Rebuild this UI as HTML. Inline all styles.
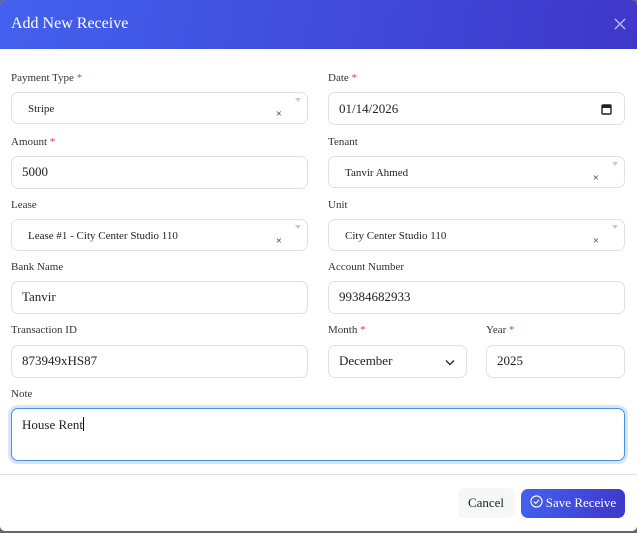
<!DOCTYPE html>
<html><head><style>
*{box-sizing:border-box;margin:0;padding:0}
body{width:637px;height:533px;background:#666;position:relative;overflow:hidden;font-family:"Liberation Serif",serif;color:#333}
.m{position:absolute;left:0;top:0;width:637px;height:531px;background:#fff;border-radius:5px;overflow:hidden}
.h{position:absolute;left:0;top:0;width:637px;height:49px;background:linear-gradient(100deg,#4361ee,#3f37c9);color:#fff;font-size:16px;padding:15px 11px}
.x{position:absolute;right:11px;top:18px}
.l{position:absolute;font-size:11px;color:#333}
.l b{color:#e63946;font-weight:normal}
.i{position:absolute;border:1px solid #dee2e6;border-radius:7px;font-size:13px;color:#222;padding-left:10px;display:flex;align-items:center;background:#fff}
.s{font-size:11px;padding-left:16px;padding-top:1px}
.s .c{position:absolute;right:25px;top:15px;font-size:11px;color:#222}
.s .a{position:absolute;right:6px;top:5px;width:0;height:0;border:3px solid transparent;border-top:4px solid #ccc}
.line{position:absolute;left:0;top:474px;width:637px;height:1px;background:#dee2e6}
</style></head><body><div class="m">
<div class="h">Add New Receive<svg class="x" width="12" height="12" viewBox="0 0 12 12"><path d="M1 1L11 11M11 1L1 11" stroke="#b8b8f0" stroke-width="1.5"/></svg></div>

<div class="l" style="left:11px;top:72px">Payment Type <b>*</b></div>
<div class="i s" style="left:11px;top:92px;width:297px;height:32px">Stripe<span class="c">×</span><span class="a"></span></div>
<div class="l" style="left:328px;top:72px">Date <b>*</b></div>
<div class="i" style="left:328px;top:92px;width:297px;height:33px">01/14/2026<svg style="position:absolute;right:12px;top:10px" width="11" height="12" viewBox="0 0 11 12"><rect x="1" y="2" width="9" height="9" rx="1" fill="none" stroke="#222" stroke-width="1.4"/><rect x="1" y="2" width="9" height="3" fill="#222"/></svg></div>

<div class="l" style="left:11px;top:136px">Amount <b>*</b></div>
<div class="i" style="left:11px;top:156px;width:297px;height:33px;padding-bottom:1px">5000</div>
<div class="l" style="left:328px;top:136px">Tenant</div>
<div class="i s" style="left:328px;top:156px;width:297px;height:32px">Tanvir Ahmed<span class="c">×</span><span class="a"></span></div>

<div class="l" style="left:11px;top:199px">Lease</div>
<div class="i s" style="left:11px;top:219px;width:297px;height:32px">Lease #1 - City Center Studio 110<span class="c">×</span><span class="a"></span></div>
<div class="l" style="left:328px;top:199px">Unit</div>
<div class="i s" style="left:328px;top:219px;width:297px;height:32px">City Center Studio 110<span class="c">×</span><span class="a"></span></div>

<div class="l" style="left:11px;top:261px">Bank Name</div>
<div class="i" style="left:11px;top:281px;width:297px;height:33px;padding-bottom:1px">Tanvir</div>
<div class="l" style="left:328px;top:261px">Account Number</div>
<div class="i" style="left:328px;top:281px;width:297px;height:33px;padding-bottom:1px">99384682933</div>

<div class="l" style="left:11px;top:324px">Transaction ID</div>
<div class="i" style="left:11px;top:345px;width:297px;height:33px;padding-bottom:1px">873949xHS87</div>
<div class="l" style="left:328px;top:324px">Month <b>*</b></div>
<div class="i" style="left:328px;top:345px;width:139px;height:33px;padding-bottom:1px">December<svg style="position:absolute;right:11px;top:13px" width="10" height="7" viewBox="0 0 10 7"><path d="M1 1.5L5 5.5L9 1.5" fill="none" stroke="#333" stroke-width="1.5"/></svg></div>
<div class="l" style="left:486px;top:324px">Year <b>*</b></div>
<div class="i" style="left:486px;top:345px;width:139px;height:33px;padding-bottom:1px">2025</div>

<div class="l" style="left:11px;top:388px">Note</div>
<div class="i" style="left:11px;top:408px;width:614px;height:53px;border-color:#4a90e2;box-shadow:0 0 0 3px #d6e6fb;align-items:flex-start;padding-top:8px">House Rent<span style="display:inline-block;width:1px;height:14px;background:#000"></span></div>

<div class="line"></div>
<div style="position:absolute;left:458px;top:488px;width:56px;height:30px;background:#f6f7f9;border-radius:5px;font-size:13px;color:#222;display:flex;align-items:center;justify-content:center">Cancel</div>
<div style="position:absolute;left:521px;top:489px;width:104px;height:29px;background:linear-gradient(100deg,#4361ee,#3f37c9);border-radius:7px;font-size:13px;color:#fff;display:flex;align-items:center;justify-content:center;gap:3px;padding-bottom:2px"><svg width="13" height="13" viewBox="0 0 14 14" style="margin-top:-3px"><circle cx="7" cy="7" r="6" fill="none" stroke="#fff" stroke-width="1.2"/><path d="M4.2 7.2L6.2 9.1L9.8 5.1" fill="none" stroke="#fff" stroke-width="1.2"/></svg>Save Receive</div>
</div></body></html>
